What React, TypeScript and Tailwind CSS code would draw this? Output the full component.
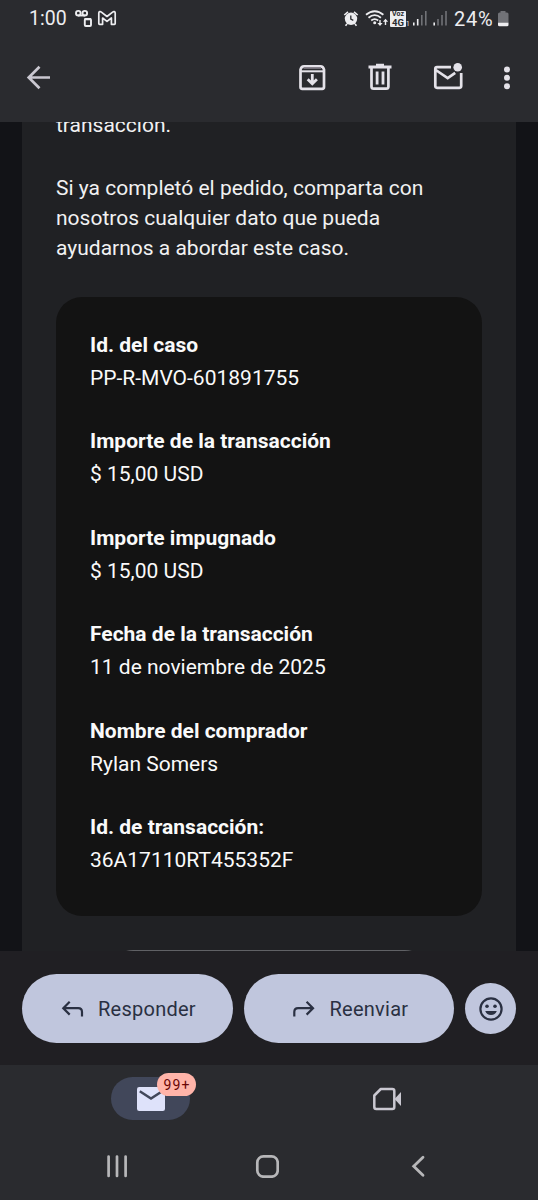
import type { ReactNode } from "react";

type IconProps = { box: string; w: string; children: ReactNode };

function Icon({ box, w, children }: IconProps) {
  return (
    <svg viewBox={box} className={`shrink-0 ${w}`} fill="none" aria-hidden="true">
      {children}
    </svg>
  );
}

function StatusBar() {
  return (
    <div className="flex h-[38px] items-center pr-[29px] pl-[29px] text-[#ededf0]">
      <span className="w-[46px] shrink-0 text-[19.500px] leading-[38px] whitespace-nowrap">1:00</span>
      <Icon box="75 0 18 38" w="h-[38px] w-[18px]">
        <g stroke="currentColor" strokeWidth="1.900">
          <circle cx="78.3" cy="13.2" r="2.3" />
          <circle cx="84.8" cy="13.2" r="2.3" />
          <path d="M78 15.5h7" />
          <rect x="84.8" y="19" width="6.2" height="7" rx="1" />
          <path d="M84.5 19.2h6.5" strokeWidth="2.2" />
        </g>
      </Icon>
      <Icon box="97 0 20 38" w="ml-1 h-[38px] w-5">
        <path
          d="M98.8 13v10.5q0 .8.8.8h3V18l4.4 3.4 4.4-3.4v6.300h3q.8 0 .8-.8V13c0-1.500-1.500-1.700-2.600-.9L107 16.500l-5.600-4.400c-1.100-.8-2.600-.6-2.600.9Z"
          stroke="currentColor"
          strokeWidth="1.700"
          strokeLinejoin="round"
        />
      </Icon>
      <div className="ml-auto flex items-center">
        <Icon box="343 0 16 38" w="h-[38px] w-4">
          <circle cx="351" cy="18.800" r="6.200" fill="currentColor" />
          <path d="M344.300 15 348 11.800M357.700 15 354 11.800M347 24l-1.500 1.800M355 24l1.500 1.800" stroke="currentColor" strokeWidth="1.600" />
          <path d="M350.800 15.500v3.700l2.500 1.200" stroke="#2a2b2f" strokeWidth="1.300" />
        </Icon>
        <Icon box="364 0 25 38" w="ml-[5px] h-[38px] w-[25px]">
          <g stroke="currentColor" strokeWidth="1.800">
            <path d="M366 14.800q8.700-7.200 17.400 0M368.500 17.700q6.200-5.200 12.400 0M371.200 20.500q3.500-2.800 7 0" />
            <path d="M380 20v4.800M385.500 25v-4.800" strokeWidth="1.400" />
          </g>
          <circle cx="374.700" cy="22.800" r="1.500" fill="currentColor" />
          <path d="M377.400 23h5.200l-2.600 3ZM382.900 21.800h5.200l-2.600-3Z" fill="currentColor" />
        </Icon>
        <div className="ml-px flex h-4 w-4 flex-col items-center justify-center rounded-[1px] bg-[#ededf0] font-bold text-[#2a2b2f]">
          <span className="text-[7px] leading-[7px]">Voz</span>
          <span className="text-[9.500px] leading-[9px]">4G</span>
        </div>
        <span className="w-[6px] pt-[10px] text-[6.500px] leading-[8px]">1</span>
        <Icon box="412 0 16 38" w="h-[38px] w-4">
          <path d="M413.800 25.500v-3M417.700 25.500v-6.500" stroke="currentColor" strokeWidth="1.600" />
          <path d="M421.800 25.500v-10.500M425.800 25.500V11" stroke="#717277" strokeWidth="1.600" />
        </Icon>
        <Icon box="432 0 16 38" w="ml-1 h-[38px] w-4">
          <path d="M434.200 25.500v-3" stroke="currentColor" strokeWidth="1.600" />
          <path d="M438 25.500v-6.500M442 25.500v-10.500M446 25.500V11" stroke="#717277" strokeWidth="1.600" />
        </Icon>
        <span className="ml-[6px] w-[43px] text-[20px] leading-[38px] tracking-[0.700px] whitespace-nowrap">24%</span>
        <Icon box="497 0 12 38" w="h-[38px] w-3">
          <path d="M500.500 11h5v1.500h1.500q1.500 0 1.500 1.500v9h-10.500v-9q0-1.500 1.500-1.500h1Z" fill="#717277" />
          <path d="M498 22.800h10.500V25q0 1.300-1.500 1.300h-7.500q-1.500 0-1.500-1.300Z" fill="currentColor" />
        </Icon>
      </div>
    </div>
  );
}

function Toolbar() {
  return (
    <div className="flex h-[84px] items-start pt-[22px] pl-[26px] text-[#e4e2e9]">
      <Icon box="26 60 26 36" w="h-9 w-[26px]">
        <path d="M50 77.500H28.500M39.500 66.700 28.700 77.500l10.800 10.800" stroke="#cac8d1" strokeWidth="2.700" />
      </Icon>
      <Icon box="296 60 32 36" w="ml-[244px] h-9 w-8">
        <path d="M300.500 69.500q.8-3.200 3.500-3.200h16.500q2.700 0 3.500 3.200v17.500q0 1.800-1.800 1.800h-19.900q-1.800 0-1.800-1.800Z" stroke="currentColor" strokeWidth="2.700" />
        <path d="M301 71.300h22.500" stroke="currentColor" strokeWidth="2" />
        <path d="M303.500 68.100h17.500" stroke="#77717b" strokeWidth="1.700" />
        <path d="M312.300 74v8.500M307.700 79.300l4.600 4.400 4.600-4.400" stroke="currentColor" strokeWidth="2.800" />
      </Icon>
      <Icon box="366 60 28 36" w="ml-[38px] h-9 w-7">
        <path d="M371.500 68v18.500q0 2.200 2.200 2.200h12.500q2.200 0 2.200-2.200V68" stroke="currentColor" strokeWidth="2.700" />
        <path d="M368.500 67h23M376 65.200h8M377.100 71.500v13M383 71.500v13" stroke="currentColor" strokeWidth="2.800" />
      </Icon>
      <Icon box="432 60 32 36" w="ml-[38px] h-9 w-8">
        <path d="M451 67.200h-14q-1.700 0-1.700 1.700v17.200q0 1.700 1.700 1.700h22.500q1.700 0 1.700-1.700V73M435.800 70l11.900 8 7.500-5.200" stroke="currentColor" strokeWidth="2.700" />
        <circle cx="457.700" cy="67.300" r="4.300" fill="currentColor" />
      </Icon>
      <Icon box="500 60 14 36" w="ml-9 h-9 w-[14px]">
        <g fill="currentColor">
          <circle cx="507" cy="69.400" r="3" />
          <circle cx="507" cy="77.800" r="3" />
          <circle cx="507" cy="86.200" r="3" />
        </g>
      </Icon>
    </div>
  );
}

const details = [
  { label: "Id. del caso", value: "PP-R-MVO-601891755" },
  { label: "Importe de la transacción", value: "$ 15,00 USD" },
  { label: "Importe impugnado", value: "$ 15,00 USD" },
  { label: "Fecha de la transacción", value: "11 de noviembre de 2025" },
  { label: "Nombre del comprador", value: "Rylan Somers" },
  { label: "Id. de transacción:", value: "36A17110RT455352F" },
];

function Message() {
  return (
    <main className="flex h-[829px] flex-col overflow-hidden bg-[#121317] px-[22px]">
      <div className="h-full w-[494px] bg-[#202124] px-[34px] text-[21px] leading-[30px] text-[#f1f1f2]">
        <p className="-mt-[12px] whitespace-nowrap">transacción.</p>
        <p className="mt-[33px] whitespace-nowrap">
          Si ya completó el pedido, comparta con
          <br />
          nosotros cualquier dato que pueda
          <br />
          ayudarnos a abordar este caso.
        </p>
        <dl className="mt-[34px] flex h-[619px] w-[426px] flex-col gap-[30.500px] rounded-[26px] bg-[#131313] px-[34px] pt-[31.500px] text-[#fafafa]">
          {details.map((d) => (
            <div key={d.label} className="flex h-[66px] flex-col whitespace-nowrap">
              <dt className="h-[33px] leading-[33px] font-bold">{d.label}</dt>
              <dd className="h-[33px] leading-[33px]">{d.value}</dd>
            </div>
          ))}
        </dl>
        <div className="mx-auto mt-[34px] h-10 w-[320px] rounded-t-[24px] border-t border-[#606165]" />
      </div>
    </main>
  );
}

function Actions() {
  const pill = "flex h-[69px] w-[210.500px] items-center rounded-full bg-[#c0c6dd] text-[20px] tracking-[0.250px]";
  return (
    <div className="flex h-[114px] items-start gap-[11px] bg-[#201f23] pt-[23px] pl-[22px] text-[#2a3042]">
      <button className={`${pill} pl-[39px]`}>
        <Icon box="61 996 24 24" w="h-6 w-6">
          <path d="M82 1015.500v-4.500q0-3.800-3.800-3.800H63.800M69.700 1000.800l-6.400 6.400 6.400 6.400" stroke="currentColor" strokeWidth="2.200" />
        </Icon>
        <span className="ml-[13px]">Responder</span>
      </button>
      <button className={`${pill} pl-[47px]`}>
        <Icon box="291 996 24 24" w="h-6 w-6">
          <path d="M294.300 1015.500v-4.500q0-3.800 3.800-3.800h14.400M306.600 1000.800l6.400 6.400-6.400 6.400" stroke="currentColor" strokeWidth="2.200" />
        </Icon>
        <span className="ml-[15px]">Reenviar</span>
      </button>
      <button className="mt-[9px] flex h-[51px] w-[51px] items-center justify-center rounded-full bg-[#c0c6dd]" aria-label="Emoji">
        <Icon box="0 0 24 24" w="h-6 w-6">
          <circle cx="12" cy="12" r="10.600" stroke="currentColor" strokeWidth="2.200" />
          <circle cx="8" cy="9.300" r="1.800" fill="currentColor" />
          <circle cx="16" cy="9.300" r="1.800" fill="currentColor" />
          <path d="M6.200 14h11.600q-1.500 4-5.800 4t-5.800-4Z" fill="currentColor" />
        </Icon>
      </button>
    </div>
  );
}

function Tabs() {
  return (
    <div className="flex h-[67px] items-start pt-3">
      <div className="relative ml-[111px] flex h-[43px] w-[79px] items-center justify-center rounded-full bg-[#41475a]">
        <Icon box="0 0 28 24" w="h-6 w-7">
          <rect width="28" height="24" rx="2.200" fill="#dee2fa" />
          <path d="m2.800 4.200 11.200 7.300 11.200-7.300" stroke="#41475a" strokeWidth="2.500" />
        </Icon>
        <span className="absolute -top-1 left-[46px] flex h-[23px] w-[39px] items-center justify-center rounded-full bg-[#ffb4a9] pl-px text-[14px] leading-none tracking-[1.100px] text-[#690606]">
          99+
        </span>
      </div>
      <Icon box="371 1085 32 28" w="mt-2 ml-[181px] h-7 w-8">
        <path d="M380.800 1089h11.500q2 0 2 2v16q0 2-2 2h-16q-2 0-2-2v-11.500Z" stroke="#cac8d1" strokeWidth="2.500" strokeLinejoin="round" />
        <path d="m394.500 1099 6.500-7v14Z" fill="#cac8d1" />
      </Icon>
    </div>
  );
}

function SystemNav() {
  return (
    <div className="flex h-[68px] items-start pt-[22px] text-[#b7b7b9]">
      <Icon box="105 1154 24 24" w="ml-[105px] h-6 w-6">
        <path d="M108.600 1156.500v19.500M117 1156.500v19.500M125.600 1156.500v19.500" stroke="currentColor" strokeWidth="2.700" strokeLinecap="round" />
      </Icon>
      <Icon box="255 1154 24 24" w="ml-[126px] h-6 w-6">
        <rect x="257.300" y="1156.300" width="20.400" height="20.400" rx="6.200" stroke="currentColor" strokeWidth="2.700" />
      </Icon>
      <Icon box="409 1154 18 24" w="ml-[130px] h-6 w-[18px]">
        <path d="m423 1157.300-9.300 9 9.300 9" stroke="currentColor" strokeWidth="2.800" strokeLinecap="round" />
      </Icon>
    </div>
  );
}

export default function App() {
  return (
    <div className="h-[1200px] w-[538px] overflow-hidden bg-[#2a2b2f] font-['Roboto',sans-serif]">
      <StatusBar />
      <Toolbar />
      <Message />
      <Actions />
      <Tabs />
      <SystemNav />
    </div>
  );
}
